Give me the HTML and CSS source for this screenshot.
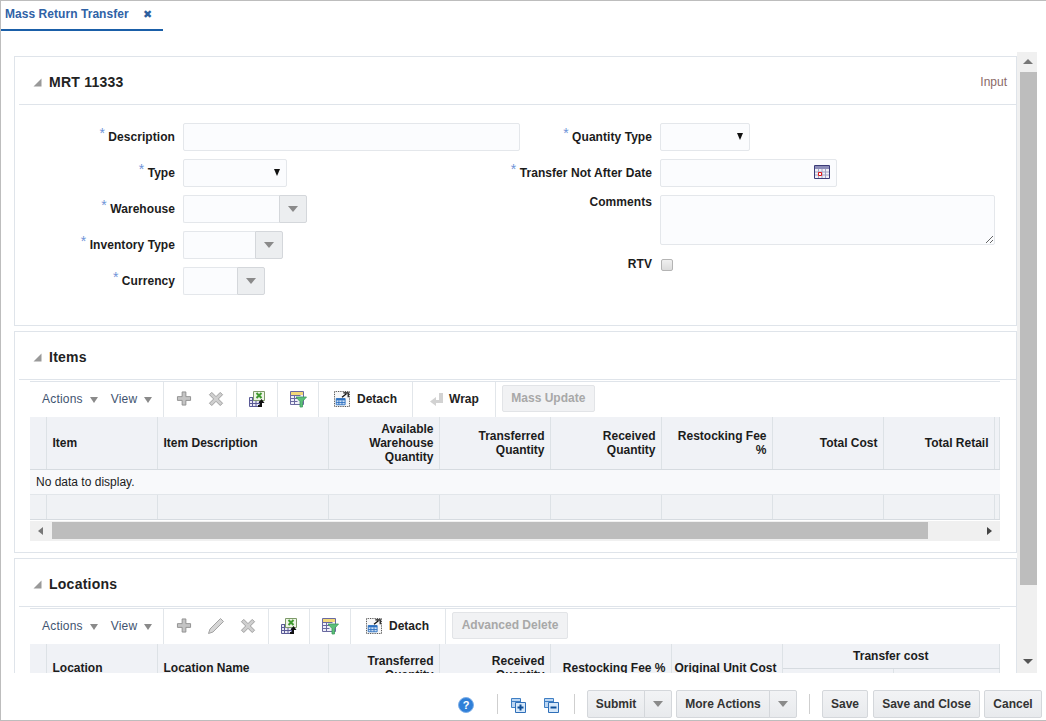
FILE: index.html
```html
<!DOCTYPE html>
<html lang="en">
<head>
    <meta charset="UTF-8">
    <title>Mass Return Transfer</title>
    <link rel="stylesheet" href="styles.css">
</head>
<body>
    <svg class="sprites" xmlns="http://www.w3.org/2000/svg">
        <symbol id="i-disclose" viewBox="0 0 9 9"><path d="M8.500 .5V8.500H.5Z" fill="#999"/></symbol>
        <symbol id="i-add" viewBox="0 0 16 16"><path d="M6 1h4v5h5v4h-5v5H6v-5H1V6h5Z" fill="#c4c4c4" stroke="#8f8f8f"/></symbol>
        <symbol id="i-delete" viewBox="0 0 16 16"><path d="M3.500 1.500 8 6l4.500-4.500 2.500 2.500L10.500 8.500 15 13l-2.500 2.500L8 11l-4.500 4.500L1 13l4.500-4.500L1 4Z" fill="#cfcfcf" stroke="#9a9a9a"/></symbol>
        <symbol id="i-edit" viewBox="0 0 18 18"><path d="M13.500 1.500 16.500 4.500 6 15 1.500 16.500 3 12Z" fill="#d6d6d6" stroke="#a3a3a3"/></symbol>
        <symbol id="i-export" viewBox="0 0 18 18">
            <path d="M1.500 7.500h10v9h-10ZM1.500 10.500h10M1.500 13.500h10M4.500 7.500v9M8 7.500v9" fill="#e8e8f4" stroke="#5a5a96"/>
            <path d="M5.500 1.500h11v9h-11Z" fill="#eef5e6" stroke="#7e9a6a"/>
            <path d="M8.500 3l5 5M13.500 3l-5 5" stroke="#3f9a2f" stroke-width="2"/>
            <path d="M10 17h4v-4h2.500L13.500 9l-3 4H12v2h-2Z" fill="#111"/>
        </symbol>
        <symbol id="i-filter" viewBox="0 0 18 18">
            <path d="M1.500 1.500h13v13h-13Z" fill="#efeff8" stroke="#6a6aa0"/>
            <path d="M2 2h12v3H2Z" fill="#f3d878"/>
            <path d="M1.500 5.500h10M1.500 8.500h7M1.500 11.500h7M5.500 5.500v9" stroke="#6a6aa0" fill="none"/>
            <path d="M7 7h10.500l-4 4.500V17h-2.500v-5.500Z" fill="#5cc07a" stroke="#3e9a5a" stroke-width=".8"/>
        </symbol>
        <symbol id="i-detach" viewBox="0 0 18 18">
            <path d="M.5.500h17v17H.5Z" fill="#f7f7f7" stroke="#222" stroke-dasharray="1 1"/>
            <path d="M2.500 8.500h10v7h-10Z" fill="#cfe0f4" stroke="#2a6fc0"/>
            <path d="M2.500 8.500h10v2h-10Z" fill="#2a6fc0"/>
            <path d="M5.500 10.500v5M9 10.500v5M2.500 13h10" stroke="#2a6fc0"/>
            <path d="M9 7l5-4M10.500 2H16v5" stroke="#111" stroke-width="1.400" fill="none"/>
        </symbol>
        <symbol id="i-wrap" viewBox="0 0 16 16"><path d="M10 2h4v10H7v3L1 10.500 7 6v3h3Z" fill="#d2d2d2"/></symbol>
        <symbol id="i-calendar" viewBox="0 0 16 14">
            <path d="M.5.500h15v13H.5Z" fill="#f0f0f6" stroke="#3c3c78"/>
            <path d="M1 1h14v3H1Z" fill="#8c8cb8"/>
            <path d="M1 7h14M1 10h14M4.500 4v9M8 4v9M11.500 4v9" stroke="#a4a4c4"/>
            <path d="M4.500 7.500h3v3h-3Z" fill="#fff" stroke="#e01818"/>
        </symbol>
        <symbol id="i-expand" viewBox="0 0 16 16">
            <path d="M1.500 1.500h9v9h-9Z" fill="#bcd6f2" stroke="#3f7fc4"/>
            <path d="M1.500 4.500h9" stroke="#3f7fc4"/>
            <path d="M5.500 5.500h10v10h-10Z" fill="#d6e8fa" stroke="#2f6fb8"/>
            <path d="M10.500 7.500v6M7.500 10.500h6" stroke="#0f4f98" stroke-width="2"/>
        </symbol>
        <symbol id="i-collapse" viewBox="0 0 16 16">
            <path d="M1.500 1.500h9v9h-9Z" fill="#bcd6f2" stroke="#3f7fc4"/>
            <path d="M1.500 4.500h9" stroke="#3f7fc4"/>
            <path d="M5.500 5.500h10v10h-10Z" fill="#d6e8fa" stroke="#2f6fb8"/>
            <path d="M7.500 10.500h6" stroke="#0f4f98" stroke-width="2"/>
        </symbol>
    </svg>

    <div class="shell">
        <div class="tabs">
            <div class="tab">
                <span class="tab-title">Mass Return Transfer</span>
                <span class="tab-close">&#10006;</span>
            </div>
        </div>

        <div class="main">
            <div class="content">

                <section class="panel panel-form">
                    <div class="panel-head">
                        <svg class="disclose"><use href="#i-disclose"/></svg>
                        <h2>MRT 11333</h2>
                        <span class="panel-status">Input</span>
                    </div>
                    <div class="form">
                        <div class="form-col form-left">
                            <label class="lbl"><span class="req">*</span> Description</label>
                            <input class="inp w-desc" type="text">

                            <label class="lbl"><span class="req">*</span> Type</label>
                            <div class="select-wrap"><select class="inp w-type"><option></option></select></div>

                            <label class="lbl"><span class="req">*</span> Warehouse</label>
                            <div class="combo">
                                <input class="inp w-wh" type="text"><button class="combo-btn"><span class="tri"></span></button>
                            </div>

                            <label class="lbl"><span class="req">*</span> Inventory Type</label>
                            <div class="combo">
                                <input class="inp w-inv" type="text"><button class="combo-btn"><span class="tri"></span></button>
                            </div>

                            <label class="lbl"><span class="req">*</span> Currency</label>
                            <div class="combo">
                                <input class="inp w-cur" type="text"><button class="combo-btn"><span class="tri"></span></button>
                            </div>
                        </div>

                        <div class="form-col form-right">
                            <label class="lbl"><span class="req">*</span> Quantity Type</label>
                            <div class="select-wrap"><select class="inp w-qty"><option></option></select></div>

                            <label class="lbl"><span class="req">*</span> Transfer Not After Date</label>
                            <div class="inp w-date date">
                                <svg class="cal"><use href="#i-calendar"/></svg>
                            </div>

                            <label class="lbl lbl-top">Comments</label>
                            <textarea class="inp w-comments"></textarea>

                            <label class="lbl lbl-rtv">RTV</label>
                            <input class="chk" type="checkbox">
                        </div>
                    </div>
                </section>

                <section class="panel panel-items">
                    <div class="panel-head">
                        <svg class="disclose"><use href="#i-disclose"/></svg>
                        <h2>Items</h2>
                    </div>
                    <div class="table-wrap">
                        <div class="toolbar">
                            <div class="tb-group tb-menus">
                                <span class="menu">Actions <span class="tri"></span></span>
                                <span class="menu">View <span class="tri"></span></span>
                            </div>
                            <div class="tb-group tb-icons">
                                <svg class="ico"><use href="#i-add"/></svg>
                                <svg class="ico"><use href="#i-delete"/></svg>
                            </div>
                            <div class="tb-group tb-icons"><svg class="ico ico-lg"><use href="#i-export"/></svg></div>
                            <div class="tb-group tb-icons"><svg class="ico ico-lg"><use href="#i-filter"/></svg></div>
                            <div class="tb-group tb-label">
                                <svg class="ico-sm"><use href="#i-detach"/></svg>
                                <span>Detach</span>
                            </div>
                            <div class="tb-group tb-label tb-wrap">
                                <svg class="ico-sm"><use href="#i-wrap"/></svg>
                                <span>Wrap</span>
                            </div>
                            <button class="btn-off w-mass">Mass Update</button>
                        </div>

                        <table class="grid">
                            <colgroup>
                                <col class="c-hd"><col class="c-id"><col class="c-name"><col class="c-num"><col class="c-num">
                                <col class="c-num"><col class="c-num"><col class="c-num"><col class="c-num"><col>
                            </colgroup>
                            <thead>
                                <tr>
                                    <th></th>
                                    <th class="left">Item</th>
                                    <th class="left">Item Description</th>
                                    <th>Available Warehouse Quantity</th>
                                    <th>Transferred Quantity</th>
                                    <th>Received Quantity</th>
                                    <th>Restocking Fee %</th>
                                    <th>Total Cost</th>
                                    <th>Total Retail</th>
                                    <th></th>
                                </tr>
                            </thead>
                            <tbody>
                                <tr class="row-empty"><td colspan="10">No data to display.</td></tr>
                                <tr class="row-foot">
                                    <td></td><td></td><td></td><td></td><td></td><td></td><td></td><td></td><td></td><td></td>
                                </tr>
                            </tbody>
                        </table>

                        <div class="hscroll">
                            <span class="arrow-left"></span>
                            <span class="hthumb"></span>
                            <span class="arrow-right"></span>
                        </div>
                    </div>
                </section>

                <section class="panel panel-loc">
                    <div class="panel-head">
                        <svg class="disclose"><use href="#i-disclose"/></svg>
                        <h2>Locations</h2>
                    </div>
                    <div class="table-wrap">
                        <div class="toolbar">
                            <div class="tb-group tb-menus">
                                <span class="menu">Actions <span class="tri"></span></span>
                                <span class="menu">View <span class="tri"></span></span>
                            </div>
                            <div class="tb-group tb-icons">
                                <svg class="ico"><use href="#i-add"/></svg>
                                <svg class="ico ico-lg"><use href="#i-edit"/></svg>
                                <svg class="ico"><use href="#i-delete"/></svg>
                            </div>
                            <div class="tb-group tb-icons"><svg class="ico ico-lg"><use href="#i-export"/></svg></div>
                            <div class="tb-group tb-icons"><svg class="ico ico-lg"><use href="#i-filter"/></svg></div>
                            <div class="tb-group tb-label">
                                <svg class="ico-sm"><use href="#i-detach"/></svg>
                                <span>Detach</span>
                            </div>
                            <button class="btn-off w-adv">Advanced Delete</button>
                        </div>

                        <table class="grid grid-loc">
                            <colgroup>
                                <col class="c-hd"><col class="c-id"><col class="c-name"><col class="c-num"><col class="c-num">
                                <col class="c-wide"><col class="c-num"><col class="c-num"><col>
                            </colgroup>
                            <thead>
                                <tr>
                                    <th rowspan="2"></th>
                                    <th rowspan="2" class="left">Location</th>
                                    <th rowspan="2" class="left">Location Name</th>
                                    <th rowspan="2">Transferred Quantity</th>
                                    <th rowspan="2">Received Quantity</th>
                                    <th rowspan="2">Restocking Fee %</th>
                                    <th rowspan="2" class="one-line">Original Unit Cost</th>
                                    <th colspan="2" class="mid">Transfer cost</th>
                                </tr>
                                <tr><th></th><th></th></tr>
                            </thead>
                        </table>
                    </div>
                </section>

            </div>

            <div class="vscroll">
                <span class="arrow-up"></span>
                <span class="vthumb"></span>
                <span class="arrow-down"></span>
            </div>
        </div>

        <div class="footer">
            <svg class="help" viewBox="0 0 16 16">
                <circle cx="8" cy="8" r="7.500" fill="#2f7fd8" stroke="#7fb0e8"/>
                <text x="8" y="12" text-anchor="middle" font-size="11" font-weight="700" fill="#fff" font-family="Liberation Sans">?</text>
            </svg>
            <span class="foot-sep sep-a"></span>
            <svg class="foot-ico ico-a"><use href="#i-expand"/></svg>
            <svg class="foot-ico ico-b"><use href="#i-collapse"/></svg>
            <span class="foot-sep sep-b"></span>
            <div class="split w-submit"><button class="btn split-main">Submit</button><button class="btn split-arrow"><span class="tri"></span></button></div>
            <div class="split w-more"><button class="btn split-main">More Actions</button><button class="btn split-arrow"><span class="tri"></span></button></div>
            <span class="foot-sep sep-c"></span>
            <button class="btn w-save">Save</button>
            <button class="btn w-close">Save and Close</button>
            <button class="btn w-cancel">Cancel</button>
        </div>
    </div>
</body>
</html>
```

FILE: styles.css
```css
* {
    margin: 0;
    padding: 0;
    box-sizing: border-box;
}

html, body {
    height: 100%;
    overflow: hidden;
}

body {
    font-family: "Liberation Sans", Arial, sans-serif;
    font-size: 12px;
    color: #1c1c1c;
    background-color: white;
}

.sprites {
    display: none;
}

.shell {
    height: 721px;
    display: flex;
    flex-direction: column;
    border-top: 1px solid #bdbdbd;
    border-left: 1px solid #bdbdbd;
    border-bottom: 1px solid #bdbdbd;
}

/* tab strip */
.tabs {
    height: 30px;
    flex: none;
}

.tab {
    width: 162px;
    height: 30px;
    padding: 6px 0 0 4px;
    display: flex;
    border-bottom: 2px solid #1a5fa8;
}

.tab-title {
    font-weight: 700;
    letter-spacing: 0.05px;
    color: #2f62a6;
}

.tab-close {
    margin-left: 14px;
    font-size: 11px;
    line-height: 14px;
    color: #2f5f9e;
}

/* scrolling area */
.main {
    height: 642px;
    flex: none;
    display: flex;
    overflow: hidden;
}

.content {
    width: 1016px;
    flex: none;
    padding: 25px 0 0 13px;
    display: flex;
    flex-direction: column;
    gap: 5px;
}

.panel {
    border: 1px solid #dfe4ea;
    flex: none;
}

.panel-form {
    height: 270px;
}

.panel-items {
    height: 222px;
}

.panel-loc {
    height: 200px;
}

.panel-head {
    height: 48px;
    margin-left: 4px;
    padding: 2px 9px 0 14px;
    display: flex;
    align-items: center;
    gap: 7px;
    border-bottom: 1px solid #dfe4ea;
}

.panel-head h2 {
    font-size: 14px;
    font-weight: 700;
    letter-spacing: 0.25px;
    color: #222;
}

.panel-status {
    margin-left: auto;
    color: #8a6a66;
}

.disclose {
    width: 9px;
    height: 9px;
    margin-top: 1px;
}

/* form */
.form {
    display: flex;
    padding-top: 18px;
}

.form-col {
    display: grid;
    align-content: start;
    align-items: center;
    justify-items: start;
    column-gap: 8px;
    row-gap: 8px;
}

.form-left {
    width: 505px;
    grid-template-columns: 160px 1fr;
    grid-auto-rows: 28px;
}

.form-right {
    grid-template-columns: 132px 1fr;
}

.lbl {
    justify-self: end;
    font-weight: 700;
    letter-spacing: 0.06px;
    white-space: nowrap;
    color: #1c1c1c;
}

.lbl-top {
    align-self: start;
}

.lbl-rtv {
    margin-top: 4px;
}

.req {
    position: relative;
    top: -3px;
    font-size: 14px;
    font-weight: 400;
    line-height: 0;
    color: #6f94d8;
}

.inp {
    height: 28px;
    display: block;
    font: inherit;
    background-color: #fbfcfe;
    border: 1px solid #e4e7eb;
    border-radius: 2px;
    outline: none;
}

select.inp {
    appearance: none;
}

.w-desc { width: 337px; }
.w-type { width: 104px; }
.w-wh { width: 96px; }
.w-inv { width: 72px; }
.w-cur { width: 54px; }
.w-qty { width: 90px; }
.w-date { width: 177px; }

.w-comments {
    width: 335px;
    height: 50px;
}

.select-wrap {
    position: relative;
}

.select-wrap::after {
    content: "";
    position: absolute;
    top: 10px;
    right: 7px;
    border-left: 3.500px solid transparent;
    border-right: 3.500px solid transparent;
    border-top: 7px solid #111;
}

.date {
    display: flex;
    justify-content: flex-end;
    align-items: center;
    padding-right: 6px;
}

.cal {
    width: 16px;
    height: 14px;
    margin-bottom: 2px;
}

.combo {
    display: flex;
}

.combo .inp {
    border-right: none;
    border-radius: 2px 0 0 2px;
}

.combo-btn {
    width: 28px;
    height: 28px;
    display: flex;
    align-items: center;
    justify-content: center;
    background-color: #eceef0;
    border: 1px solid #d4d7db;
    border-radius: 0 2px 2px 0;
}

.tri {
    display: inline-block;
    width: 0;
    height: 0;
    border-left: 5px solid transparent;
    border-right: 5px solid transparent;
    border-top: 6px solid #8a8a8a;
}

.chk {
    appearance: none;
    width: 12px;
    height: 12px;
    margin: 5px 0 0 1px;
    background: linear-gradient(#f0f0f0, #dcdcdc);
    border: 1px solid #b4b4b4;
    border-radius: 2px;
}

/* table sections */
.table-wrap {
    width: 970px;
    margin: 1px 0 0 15px;
}

.toolbar {
    height: 36px;
    display: flex;
    align-items: stretch;
    border-top: 1px solid #dfe4ea;
}

.tb-group {
    display: flex;
    align-items: center;
    padding-bottom: 2px;
    border-right: 1px solid #e2e6ea;
}

.tb-menus {
    width: 134px;
    padding-left: 12px;
    gap: 13px;
}

.menu {
    color: #3f5470;
    letter-spacing: 0.2px;
    display: flex;
    align-items: center;
    gap: 7px;
}

.menu .tri {
    margin-top: 2px;
    border-left-width: 4px;
    border-right-width: 4px;
}

.tb-icons {
    padding-left: 10px;
    padding-right: 10px;
    gap: 12px;
}

.ico {
    width: 20px;
    height: 15px;
}

.ico-lg {
    height: 18px;
}

.ico-sm {
    width: 16px;
    height: 16px;
}

.tb-label {
    padding-left: 15px;
    padding-right: 15px;
    gap: 7px;
    font-weight: 700;
    color: #222;
}

.panel-loc .tb-label {
    padding-right: 16px;
}

.tb-wrap {
    padding-left: 16px;
    padding-right: 16px;
    gap: 4px;
}

.btn-off {
    height: 27px;
    align-self: center;
    margin: 0 0 2px 6px;
    padding-bottom: 1px;
    font: inherit;
    font-weight: 700;
    color: #a8a8a8;
    background-color: #f1f2f4;
    border: 1px solid #e2e4e7;
    border-radius: 2px;
}

.w-mass { width: 93px; }
.w-adv { width: 116px; }

.grid {
    width: 970px;
    table-layout: fixed;
    border-collapse: collapse;
}

.c-hd { width: 16px; }
.c-id { width: 111px; }
.c-name { width: 171px; }
.c-num { width: 111px; }
.c-wide { width: 121px; }

.grid th {
    height: 52px;
    padding: 0 5px;
    font-weight: 700;
    line-height: 14px;
    text-align: right;
    color: #1c1c1c;
    background-color: #f0f2f6;
    border-right: 1px solid #dde2e6;
    border-bottom: 1px solid #d6dbe0;
}

.grid th.left {
    padding-left: 6px;
    text-align: left;
}

.grid th.mid {
    text-align: center;
}

.grid-loc th {
    height: 24px;
}

.grid th.one-line {
    padding-left: 0;
    white-space: nowrap;
}

.row-empty td {
    height: 25px;
    padding-left: 6px;
    background-color: #f8f9fb;
    border-bottom: 1px solid #e2e6ea;
}

.row-foot td {
    height: 25px;
    background-color: #f0f2f5;
    border-right: 1px solid #dde2e6;
    border-bottom: 1px solid #d6dbe0;
}

.hscroll {
    height: 20px;
    margin-top: 1px;
    position: relative;
    background-color: #f0f0f0;
}

.hthumb {
    position: absolute;
    left: 22px;
    top: 1px;
    width: 876px;
    height: 17px;
    background-color: #bdbdbd;
}

.arrow-left,
.arrow-right {
    position: absolute;
    top: 6px;
    width: 0;
    height: 0;
    border-top: 4px solid transparent;
    border-bottom: 4px solid transparent;
}

.arrow-left {
    left: 8px;
    border-right: 5px solid #777;
}

.arrow-right {
    right: 8px;
    border-left: 5px solid #444;
}

/* page scrollbar */
.vscroll {
    width: 20px;
    height: 621px;
    margin-top: 21px;
    flex: none;
    position: relative;
    background-color: #f0f0f0;
}

.vthumb {
    position: absolute;
    top: 20px;
    left: 3px;
    width: 17px;
    height: 513px;
    background-color: #bdbdbd;
}

.arrow-up,
.arrow-down {
    position: absolute;
    left: 6px;
    width: 0;
    height: 0;
    border-left: 5px solid transparent;
    border-right: 5px solid transparent;
}

.arrow-up {
    top: 7px;
    border-bottom: 5px solid #777;
}

.arrow-down {
    bottom: 9px;
    border-top: 5px solid #555;
}

/* bottom buttons */
.footer {
    flex: 1;
    display: flex;
    align-items: flex-end;
    padding: 0 0 2px 457px;
}

.footer > * {
    flex: none;
}

.help {
    width: 16px;
    height: 16px;
    margin-bottom: 5px;
}

.foot-sep {
    width: 1px;
    height: 20px;
    margin-bottom: 4px;
    background-color: #cfcfcf;
}

.sep-a { margin-left: 23px; }
.sep-b { margin-left: 15px; }
.sep-c { margin-left: 12px; }

.foot-ico {
    width: 16px;
    height: 16px;
    margin-bottom: 5px;
}

.ico-a { margin-left: 12px; }
.ico-b { margin-left: 17px; }

.btn {
    height: 28px;
    font: inherit;
    font-weight: 700;
    color: #333;
    background: linear-gradient(#f2f3f5, #e8eaed);
    border: 1px solid #d4d7db;
    border-radius: 2px;
}

.split {
    display: flex;
}

.split-main {
    flex: 1;
    border-radius: 2px 0 0 2px;
}

.split-arrow {
    width: 28px;
    margin-left: -1px;
    display: flex;
    align-items: center;
    justify-content: center;
    border-radius: 0 2px 2px 0;
}

.w-submit { width: 85px; margin-left: 12px; }
.w-more { width: 121px; margin-left: 4px; }
.w-save { width: 46px; margin-left: 12px; }
.w-close { width: 107px; margin-left: 5px; }
.w-cancel { width: 58px; margin-left: 4px; }
```
